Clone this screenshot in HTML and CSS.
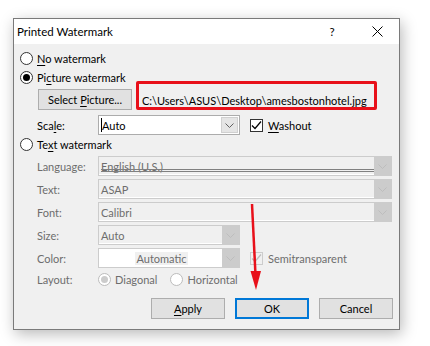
FILE: index.html
```html
<!DOCTYPE html>
<html lang="en">
<head>
  <meta charset="UTF-8" />
  <title>Printed Watermark</title>
  <link rel="stylesheet" href="styles.css">
</head>
<body>

<div class="dialog">
  <div class="titlebar">
    <span class="title">Printed Watermark</span>
    <span class="help">?</span>
    <svg class="close" width="11" height="11" viewBox="0 0 11 11">
      <path d="M0.5 0.5 L10.5 10.5 M10.5 0.5 L0.5 10.5" stroke="#000" stroke-width="1" fill="none"/>
    </svg>
  </div>

  <div class="content">
    <div class="radio-row">
      <span class="radio"></span>
      <span><u>N</u>o watermark</span>
    </div>
    <div class="radio-row">
      <span class="radio checked"></span>
      <span>Pi<u>c</u>ture watermark</span>
    </div>

    <div class="picture-row">
      <button class="btn select-btn">Select <u>P</u>icture...</button>
      <div class="path-box">C:\Users\ASUS\Desktop\amesbostonhotel.jpg</div>
    </div>

    <div class="field-row first">
      <span class="field-label">Sca<u>l</u>e:</span>
      <div class="combo">
        <span class="combo-text"><span class="caret"></span>Auto</span>
        <span class="combo-btn"><svg width="9" height="5" viewBox="0 0 9 5"><path d="M0.5 0.5 L4.5 4.5 L8.5 0.5" stroke="#606060" fill="none"/></svg></span>
      </div>
      <div class="check-row">
        <span class="checkbox"><svg width="11" height="11" viewBox="0 0 11 11"><path d="M1 5.5 L4 8.5 L10 1.5" stroke="#000" stroke-width="1.2" fill="none"/></svg></span>
        <span><u>W</u>ashout</span>
      </div>
    </div>

    <div class="radio-row">
      <span class="radio"></span>
      <span>Te<u>x</u>t watermark</span>
    </div>

    <div class="field-row disabled">
      <span class="field-label">Language:</span>
      <div class="combo wide lang">
        <span class="combo-text">English (U.S.)</span>
        <span class="combo-btn"><svg width="9" height="5" viewBox="0 0 9 5"><path d="M0.5 0.5 L4.5 4.5 L8.5 0.5" stroke="#bdbdbd" fill="none"/></svg></span>
      </div>
    </div>

    <div class="field-row disabled">
      <span class="field-label">Text:</span>
      <div class="combo wide">
        <span class="combo-text">ASAP</span>
        <span class="combo-btn"><svg width="9" height="5" viewBox="0 0 9 5"><path d="M0.5 0.5 L4.5 4.5 L8.5 0.5" stroke="#bdbdbd" fill="none"/></svg></span>
      </div>
    </div>

    <div class="field-row disabled">
      <span class="field-label">Font:</span>
      <div class="combo wide">
        <span class="combo-text">Calibri</span>
        <span class="combo-btn"><svg width="9" height="5" viewBox="0 0 9 5"><path d="M0.5 0.5 L4.5 4.5 L8.5 0.5" stroke="#bdbdbd" fill="none"/></svg></span>
      </div>
    </div>

    <div class="field-row disabled">
      <span class="field-label">Size:</span>
      <div class="combo">
        <span class="combo-text">Auto</span>
        <span class="combo-btn"><svg width="9" height="5" viewBox="0 0 9 5"><path d="M0.5 0.5 L4.5 4.5 L8.5 0.5" stroke="#bdbdbd" fill="none"/></svg></span>
      </div>
    </div>

    <div class="field-row disabled">
      <span class="field-label">Color:</span>
      <div class="combo color">
        <span class="combo-text"><span class="swatch">Automatic</span></span>
        <span class="combo-btn"><svg width="9" height="5" viewBox="0 0 9 5"><path d="M0.5 0.5 L4.5 4.5 L8.5 0.5" stroke="#bdbdbd" fill="none"/></svg></span>
      </div>
      <div class="check-row">
        <span class="checkbox off"><svg width="11" height="11" viewBox="0 0 11 11"><path d="M1 5.5 L4 8.5 L10 1.5" stroke="#bdbdbd" stroke-width="1.2" fill="none"/></svg></span>
        <span>Semitransparent</span>
      </div>
    </div>

    <div class="field-row disabled layout-row">
      <span class="field-label">Layout:</span>
      <div class="layout-options">
        <span class="radio off checked"></span>
        <span class="opt">Diagonal</span>
        <span class="radio off"></span>
        <span>Horizontal</span>
      </div>
    </div>

    <div class="button-row">
      <button class="btn"><u>A</u>pply</button>
      <button class="btn default">OK</button>
      <button class="btn">Cancel</button>
    </div>
  </div>
</div>

<!-- annotation arrow -->
<svg class="arrow" width="20" height="92" viewBox="0 0 20 92">
  <path d="M5 1 L8.5 72" stroke="#e8101a" stroke-width="2.5" fill="none"/>
  <path d="M3.5 68 L14 68 L9 87 Z" fill="#e8101a"/>
</svg>

</body>
</html>
```

FILE: styles.css
```css
* {
  box-sizing: border-box;
}

body {
  margin: 0;
  padding: 18px 0 0 13px;
  background: #ffffff;
  font-family: Lato, "Segoe UI", sans-serif;
  font-size: 11px;
  color: #000000;
  position: relative;
  height: 346px;
  overflow: hidden;
}

u {
  text-decoration-thickness: 1px;
  text-underline-offset: 2px;
}

.dialog {
  width: 387px;
  height: 312px;
  background: #f0f0f0;
  border: 1px solid #7a7a7a;
  box-shadow: 2px 4px 14px rgba(0, 0, 0, 0.28);
  display: flex;
  flex-direction: column;
}

.titlebar {
  height: 25px;
  background: #ffffff;
  display: flex;
  align-items: center;
  padding-left: 3px;
  font-size: 11.5px;
}

.title {
  flex: 1;
}

.help {
  width: 10px;
  text-align: center;
}

.close {
  margin-left: 35px;
  margin-right: 16px;
}

.content {
  flex: 1;
  padding: 5px 6px 0 6px;
  display: flex;
  flex-direction: column;
}

.radio-row {
  display: flex;
  align-items: center;
  height: 19px;
  gap: 4px;
}

.radio {
  width: 13px;
  height: 13px;
  border: 1px solid #333333;
  border-radius: 50%;
  background: #ffffff;
  display: inline-flex;
  align-items: center;
  justify-content: center;
  flex-shrink: 0;
}

.radio.checked::after {
  content: "";
  width: 7px;
  height: 7px;
  border-radius: 50%;
  background: #000000;
}

.radio.off {
  border-color: #bcbcbc;
}

.radio.off.checked::after {
  background: #cccccc;
}

.picture-row {
  display: flex;
  margin-top: 2px;
  padding-left: 18px;
  height: 21px;
}

.btn {
  font-family: inherit;
  font-size: 11px;
  color: #000000;
  background: #e1e1e1;
  border: 1px solid #adadad;
  height: 21px;
  padding: 0;
}

.select-btn {
  width: 94px;
}

.path-box {
  position: relative;
  margin-left: 4px;
  padding-left: 6px;
  width: 241px;
  display: flex;
  align-items: center;
  padding-top: 1px;
}

/* red annotation frame */
.path-box::after {
  content: "";
  position: absolute;
  left: 0;
  right: 0;
  top: -8px;
  bottom: 0;
  border: 3px solid #e8101a;
  border-radius: 2px;
}

.field-row {
  display: grid;
  grid-template-columns: 61px auto auto;
  justify-content: start;
  align-items: center;
  padding-left: 17px;
  height: 20px;
  margin-top: 3px;
}

.field-row.first {
  margin-top: 5px;
}

.radio-row + .field-row {
  margin-top: 2px;
}

.field-row.disabled {
  color: #6d6d6d;
}

.combo {
  width: 142px;
  height: 20px;
  border: 1px solid #acacac;
  background: #ffffff;
  display: flex;
}

.combo.wide {
  width: 294px;
}

.combo-text {
  flex: 1;
  display: flex;
  align-items: center;
  padding-left: 2px;
  position: relative;
}

.caret {
  width: 1px;
  height: 14px;
  background: #000000;
}

.combo-btn {
  width: 17px;
  background: #e5e5e5;
  display: flex;
  align-items: center;
  justify-content: center;
  margin: 1px;
  border: 1px solid #d0d0d0;
}

.disabled .combo {
  border-color: #cccccc;
  background: #f0f0f0;
  box-shadow: inset 0 -1px #ffffff;
}

.disabled .combo-btn {
  background: #cccccc;
  border-color: #cccccc;
  margin: 0;
}

.combo.lang .combo-text::after {
  content: "";
  position: absolute;
  left: 2px;
  right: 0;
  bottom: 3px;
  height: 1px;
  border-top: 1px solid #808080;
  border-bottom: 1px solid #808080;
}

.disabled .combo.color {
  background: #ffffff;
}

.color .combo-text {
  justify-content: center;
}

.swatch {
  background: #f0f0f0;
  padding: 0 1px;
}

.check-row {
  display: flex;
  align-items: center;
  gap: 5px;
  margin-left: 10px;
}

.checkbox {
  width: 13px;
  height: 13px;
  border: 1px solid #333333;
  background: #ffffff;
  display: flex;
  align-items: center;
  justify-content: center;
}

.checkbox.off {
  border-color: #cccccc;
  background: #f0f0f0;
}

.layout-row {
  height: 19px;
  margin-top: 2px;
}

.layout-options {
  display: flex;
  align-items: center;
  gap: 4px;
}

.opt {
  margin-right: 9px;
}

.button-row {
  display: flex;
  justify-content: flex-end;
  gap: 10px;
  margin-top: 9px;
}

.button-row .btn {
  width: 74px;
}

.btn.default {
  border: 2px solid #0078d7;
}

.arrow {
  position: absolute;
  left: 247px;
  top: 203px;
}
```
